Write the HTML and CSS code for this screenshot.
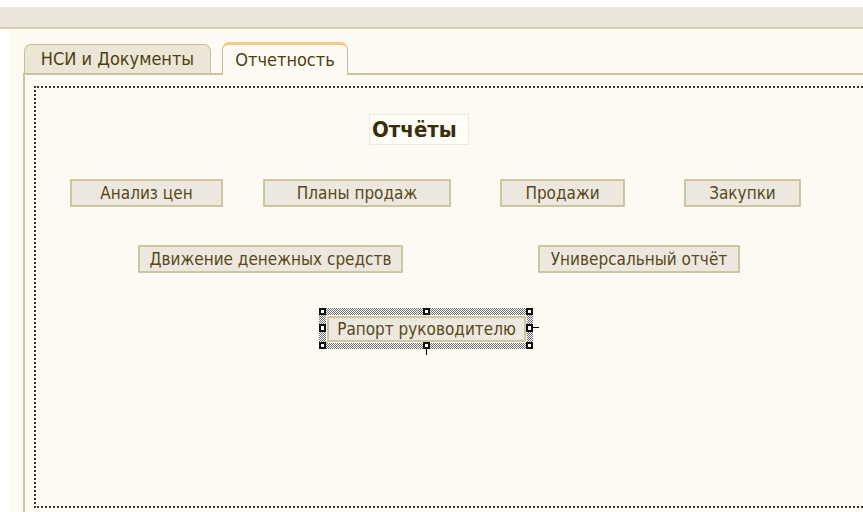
FILE: index.html
```html
<!DOCTYPE html>
<html lang="ru">
<head>
<meta charset="utf-8">
<title>Форма: Отчетность</title>
<link rel="stylesheet" href="styles.css">
</head>
<body>
<div class="toolbar"></div>
<div class="workspace">
  <div class="gutter"></div>
  <div class="form">
    <div class="tabs">
      <div class="tab">НСИ и Документы</div>
      <div class="tab tab-active">Отчетность</div>
    </div>
    <div class="panel">
      <div class="canvas">
        <div class="caption">Отчёты</div>
        <button class="btn b-prices">Анализ цен</button>
        <button class="btn b-plans">Планы продаж</button>
        <button class="btn b-sales">Продажи</button>
        <button class="btn b-purchases">Закупки</button>
        <button class="btn b-cash">Движение денежных средств</button>
        <button class="btn b-universal">Универсальный отчёт</button>
        <div class="selection">
          <button class="btn b-report">Рапорт руководителю</button>
          <span class="handle h-tl"></span>
          <span class="handle h-tm"></span>
          <span class="handle h-tr"></span>
          <span class="handle h-ml"></span>
          <span class="handle h-mr"></span>
          <span class="handle h-bl"></span>
          <span class="handle h-bm"></span>
          <span class="handle h-br"></span>
        </div>
      </div>
    </div>
  </div>
</div>
</body>
</html>
```

FILE: styles.css
```css
html, body {
  margin: 0;
  padding: 0;
  background: #ffffff;
  height: 100%;
  overflow: hidden;
}

body {
  font-family: "DejaVu Sans Condensed", "DejaVu Sans", "Liberation Sans", sans-serif;
  font-stretch: condensed;
  color: #5a4818;
}

/* strip above the form */
.toolbar {
  margin-top: 7px;
  height: 20px;
  background: #ece5dc;
  border-bottom: 2px solid #d8d0ae;
}

.workspace {
  display: flex;
  height: calc(100% - 29px);
}

.gutter {
  width: 10px;
  background: #ffffff;
}

.form {
  flex: 1;
  background: #fdfaf4;
  padding: 13px 0 0 13px;
  display: flex;
  flex-direction: column;
  min-width: 0;
}

/* tab strip */
.tabs {
  display: flex;
  align-items: flex-end;
  height: 31px;
  gap: 11px;
  padding-left: 1px;
}

.tab {
  box-sizing: border-box;
  width: 187px;
  height: 29px;
  border: 1px solid #c9be92;
  border-bottom: none;
  border-radius: 7px 7px 0 0;
  background: #ece6d6;
  font-size: 18px;
  line-height: 27px;
  text-align: center;
  color: #4e3f12;
}

.tab-active {
  width: 126px;
  height: 33px;
  background: #fdfaf4;
  border-top: 3px solid #f2c985;
  line-height: 29px;
  margin-bottom: -2px;
  position: relative;
  z-index: 1;
}

.panel {
  flex: 1;
  border-top: 2px solid #cdc39b;
  border-left: 2px solid #cdc39b;
  padding: 11px 0 0 9px;
  display: flex;
  flex-direction: column;
}

/* designer surface of the form */
.canvas {
  position: relative;
  height: 418px;
  border: 2px dotted #333333;
  border-right: none;
}

.caption {
  position: absolute;
  left: 333px;
  top: 26px;
  width: 100px;
  height: 31px;
  box-sizing: border-box;
  border: 1px solid #efe9dc;
  background: #fffdf8;
  font-weight: bold;
  font-size: 22px;
  line-height: 29px;
  padding-left: 2px;
  color: #3a2d08;
}

.btn {
  position: absolute;
  box-sizing: border-box;
  height: 28px;
  margin: 0;
  padding: 0;
  border: 2px solid #cfc59f;
  border-radius: 1px;
  background: #ece8df;
  font-family: inherit;
  font-stretch: condensed;
  font-size: 17px;
  color: #5a4818;
  text-align: center;
  line-height: 22px;
  white-space: nowrap;
}

.b-prices    { left: 34px;  top: 91px;  width: 153px; }
.b-plans     { left: 227px; top: 91px;  width: 188px; }
.b-sales     { left: 464px; top: 91px;  width: 125px; }
.b-purchases { left: 648px; top: 91px;  width: 117px; }
.b-cash      { left: 102px; top: 157px; width: 265px; }
.b-universal { left: 502px; top: 157px; width: 202px; }

/* selected control with resize handles */
.selection {
  position: absolute;
  left: 283px;
  top: 220px;
  width: 214px;
  height: 41px;
  background: repeating-conic-gradient(#6e6e6e 0 25%, #ffffff 0 50%) 0 0 / 2px 2px;
}

.b-report {
  left: 8px;
  top: 8px;
  width: 199px;
  height: 26px;
  line-height: 21px;
  outline: 1px solid #fdfaf4;
}

.handle {
  position: absolute;
  width: 7px;
  height: 7px;
  box-sizing: border-box;
  border: 2px solid #111;
  background: #fff;
}

.h-tl { left: 0;     top: 0; }
.h-tm { left: 104px; top: 0; }
.h-tr { left: 207px; top: 0; }
.h-ml { left: 0;     top: 16px; height: 8px; }
.h-mr { left: 207px; top: 16px; height: 8px; }
.h-bl { left: 0;     top: 34px; }
.h-bm { left: 104px; top: 34px; }
.h-br { left: 207px; top: 34px; }

.h-mr::after {
  content: "";
  position: absolute;
  left: 5px;
  top: 1px;
  width: 6px;
  height: 1px;
  background: #000;
}

.h-bm::after {
  content: "";
  position: absolute;
  left: 1px;
  top: 5px;
  width: 1px;
  height: 6px;
  background: #000;
}
```
